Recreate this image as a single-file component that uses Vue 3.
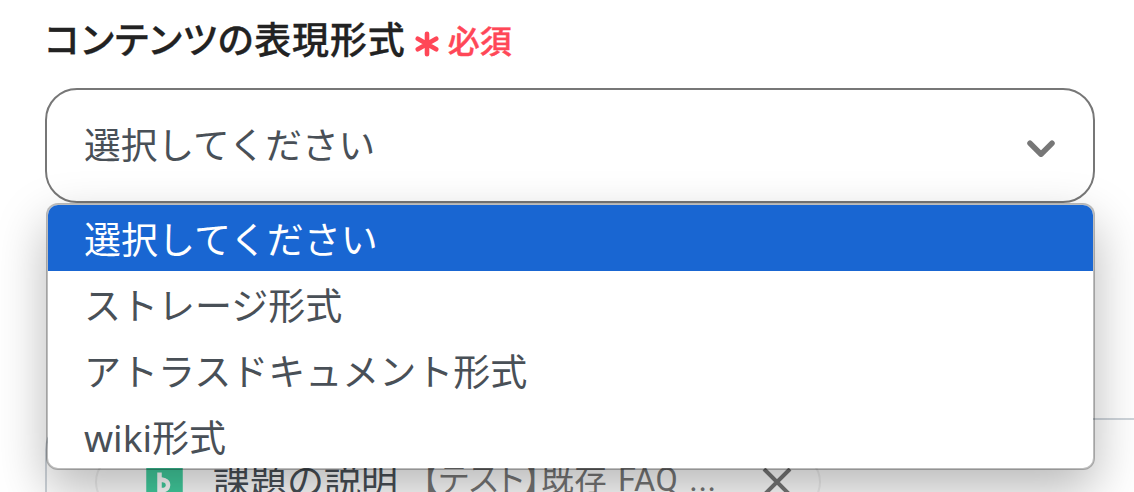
<template>
  <div class="page">
    <!-- Label -->
    <label class="field-label">
      <span class="label-text">コンテンツの表現形式</span>
      <svg class="asterisk" viewBox="0 0 24 26">
        <path d="M12 2.8v20.4M2.800 7.7l18.4 10.6M21.2 7.7L2.800 18.3" />
      </svg>
      <span class="required">必須</span>
    </label>

    <!-- Select -->
    <div class="select" @click="open = !open">
      <span class="select-value">{{ options[selected] }}</span>
      <svg class="chevron" viewBox="0 0 30 20">
        <path d="M4 4.2L15 15.2L26 4.2" />
      </svg>
      <ul v-if="open" class="menu">
        <li
          v-for="(option, index) in options"
          :key="option"
          class="option"
          :class="{ active: index === selected }"
          @click.stop="choose(index)"
        >
          {{ option }}
        </li>
      </ul>
    </div>

    <!-- Next field, mostly behind the menu -->
    <div class="editor">
      <div class="chip">
        <svg class="chip-logo" viewBox="0 0 41 41">
          <rect width="41" height="41" fill="#42ce9f" />
          <path d="M15.5 10.5v17.5h4.5a5 5 0 0 0 1-9.5l-5.5-1.5" />
        </svg>
        <span class="chip-title">課題の説明</span>
        <span class="chip-text">【テスト】既存 FAQ ...</span>
        <svg class="chip-close" viewBox="0 0 30 30">
          <path d="M2 2l26 26M28 2L2 28" />
        </svg>
      </div>
    </div>
  </div>
</template>

<script setup>
import { ref } from 'vue';

const options = [
  '選択してください',
  'ストレージ形式',
  'アトラスドキュメント形式',
  'wiki形式',
];
const selected = ref(0);
const open = ref(true);

const choose = (index) => {
  selected.value = index;
  open.value = false;
};
</script>

<style>
body {
  background: #fff;
  overflow: hidden;
}
</style>

<style scoped>
.page {
  box-sizing: border-box;
  height: 492px;
  padding: 14px 0 0 45px;
  overflow: hidden;
  font-family: "Noto Sans", "Noto Sans CJK JP", sans-serif;
  color: #495057;
}

/* Label */
.field-label {
  display: flex;
  align-items: center;
  height: 52px;
  margin-bottom: 22px;
}

.label-text {
  font-size: 37px;
  font-weight: 500;
  font-feature-settings: "palt";
  letter-spacing: 0.85px;
  line-height: 52px;
  color: #222;
  white-space: nowrap;
  -webkit-text-stroke: 0.3px #222;
}

.asterisk {
  width: 24px;
  height: 26px;
  margin: 8px 9px 0 9px;
  fill: none;
  stroke: #ff4757;
  stroke-width: 4.6;
  stroke-linecap: round;
}

.required {
  margin-top: 1px;
  font-size: 32px;
  font-weight: 500;
  line-height: 52px;
  color: #ff4757;
  -webkit-text-stroke: 0.4px #ff4757;
}

/* Select */
.select {
  position: relative;
  box-sizing: border-box;
  display: flex;
  align-items: center;
  justify-content: space-between;
  width: 1050px;
  height: 115px;
  padding: 0 37px;
  border: 2px solid #777;
  border-radius: 32px;
}

.select-value {
  margin-top: -2px;
  font-size: 36.7px;
  line-height: 54px;
}

.chevron {
  width: 30px;
  height: 20px;
  margin-top: 6px;
  fill: none;
  stroke: #777;
  stroke-width: 5.5;
  stroke-linecap: round;
  stroke-linejoin: round;
}

/* Dropdown */
.menu {
  position: absolute;
  z-index: 1;
  top: 113px;
  left: -1px;
  width: 1045px;
  height: 263px;
  margin: 0;
  padding: 0;
  list-style: none;
  background: #fff;
  background-clip: padding-box;
  border: 2px solid rgba(0, 0, 0, 0.26);
  border-radius: 12px;
  overflow: hidden;
  box-shadow: 0 20px 50px rgba(0, 0, 0, 0.28);
}

.option {
  box-sizing: border-box;
  height: 66px;
  padding: 2px 0 0 36px;
  font-size: 37px;
  line-height: 66px;
}

.option.active {
  color: #fff;
  background: #1966d2;
}

/* Editor box */
.editor {
  box-sizing: border-box;
  width: 1150px;
  height: 200px;
  margin-top: 215px;
  padding: 33px 0 0 48px;
  border: 2px solid #ced4da;
  border-radius: 32px;
}

.chip {
  box-sizing: border-box;
  display: flex;
  align-items: center;
  width: 726px;
  height: 58px;
  padding-left: 47px;
  border: 2px solid #f0f0f0;
  border-radius: 29px;
  font-size: 37px;
  line-height: 50px;
  white-space: nowrap;
}

.chip-logo {
  flex-shrink: 0;
  width: 41px;
  height: 41px;
  margin-right: 28px;
  fill: none;
  stroke: #fff;
  stroke-width: 4.5;
}

.chip-title {
  margin: -3px 24px 0 0;
}

.chip-text {
  width: 290px;
  margin-top: -4px;
  font-family: Roboto, "Noto Sans CJK JP", sans-serif;
  font-size: 32.5px;
  font-feature-settings: "palt";
  letter-spacing: 0.6px;
  word-spacing: 2px;
  color: #777;
}

.chip-close {
  flex-shrink: 0;
  width: 30px;
  height: 30px;
  margin-left: 50px;
  fill: none;
  stroke: #777;
  stroke-width: 4;
}
</style>
